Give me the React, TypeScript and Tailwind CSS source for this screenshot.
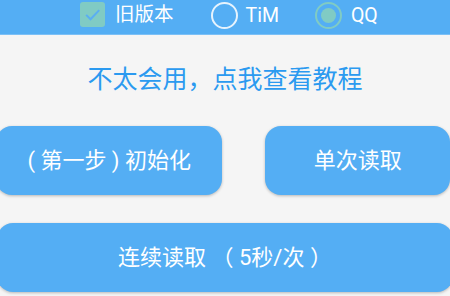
import React, { useState } from 'react';

const font = "font-['Roboto','Noto_Sans_CJK_SC',sans-serif]";

function App() {
  const [oldVersion, setOldVersion] = useState(true);
  const [client, setClient] = useState<'tim' | 'qq'>('qq');

  return (
    <div className={`w-[450px] h-[296px] overflow-hidden bg-[#f5f5f5] ${font}`}>
      {/* Top bar */}
      <div className="h-[35px] bg-[#54aef4] border-b border-[#7cc0f6] flex items-start pt-[2px] text-white text-[19.5px] leading-[25px]">
        <button
          className="flex items-center ml-[80px]"
          onClick={() => setOldVersion(!oldVersion)}
        >
          <span className="w-[25px] h-[25px] rounded-[3px] bg-[#80cbc4] flex items-center justify-center">
            {oldVersion && (
              <svg width="19" height="19" viewBox="0 0 24 24">
                <path d="M4 12.5 L9.5 18 L20.5 6.5" fill="none" stroke="#5aaef2" strokeWidth="2.6" />
              </svg>
            )}
          </span>
          <span className="ml-[10px]">旧版本</span>
        </button>

        <button className="flex items-center ml-[37px]" onClick={() => setClient('tim')}>
          <span className="w-[27px] h-[27px] rounded-full border-[2.5px] border-[#e6f3fd] flex items-center justify-center">
            {client === 'tim' && <span className="w-[15px] h-[15px] rounded-full bg-[#80cbc4]" />}
          </span>
          <span className="ml-[8px]">TiM</span>
        </button>

        <button className="flex items-center ml-[36px]" onClick={() => setClient('qq')}>
          <span
            className={`w-[27px] h-[27px] rounded-full border-[2.5px] flex items-center justify-center ${
              client === 'qq' ? 'border-[#80cbc4]' : 'border-[#e6f3fd]'
            }`}
          >
            {client === 'qq' && <span className="w-[15px] h-[15px] rounded-full bg-[#80cbc4]" />}
          </span>
          <span className="ml-[9px]">QQ</span>
        </button>
      </div>

      {/* Help link */}
      <div className="h-[91px] flex items-center justify-center pb-[2px]">
        <span className="text-[#2b9af0] text-[25px] leading-none">不太会用，点我查看教程</span>
      </div>

      {/* Button row */}
      <div className="flex ml-[-4px] gap-[43px]">
        <button className="w-[228px] h-[69px] rounded-[16px] bg-[#54aef4] text-white text-[22px] shadow-[0_1px_3px_rgba(0,0,0,0.25)]">
          ( 第一步 ) 初始化
        </button>
        <button className="w-[186px] h-[69px] rounded-[16px] bg-[#54aef4] text-white text-[22px] shadow-[0_1px_3px_rgba(0,0,0,0.25)]">
          单次读取
        </button>
      </div>

      {/* Continuous read */}
      <div className="mt-[28px] ml-[-3px]">
        <button className="w-[456px] h-[69px] rounded-[16px] bg-[#54aef4] text-white text-[22px] shadow-[0_1px_3px_rgba(0,0,0,0.25)]">
          连续读取 （ 5秒/次 ）
        </button>
      </div>
    </div>
  );
}

export default App;
